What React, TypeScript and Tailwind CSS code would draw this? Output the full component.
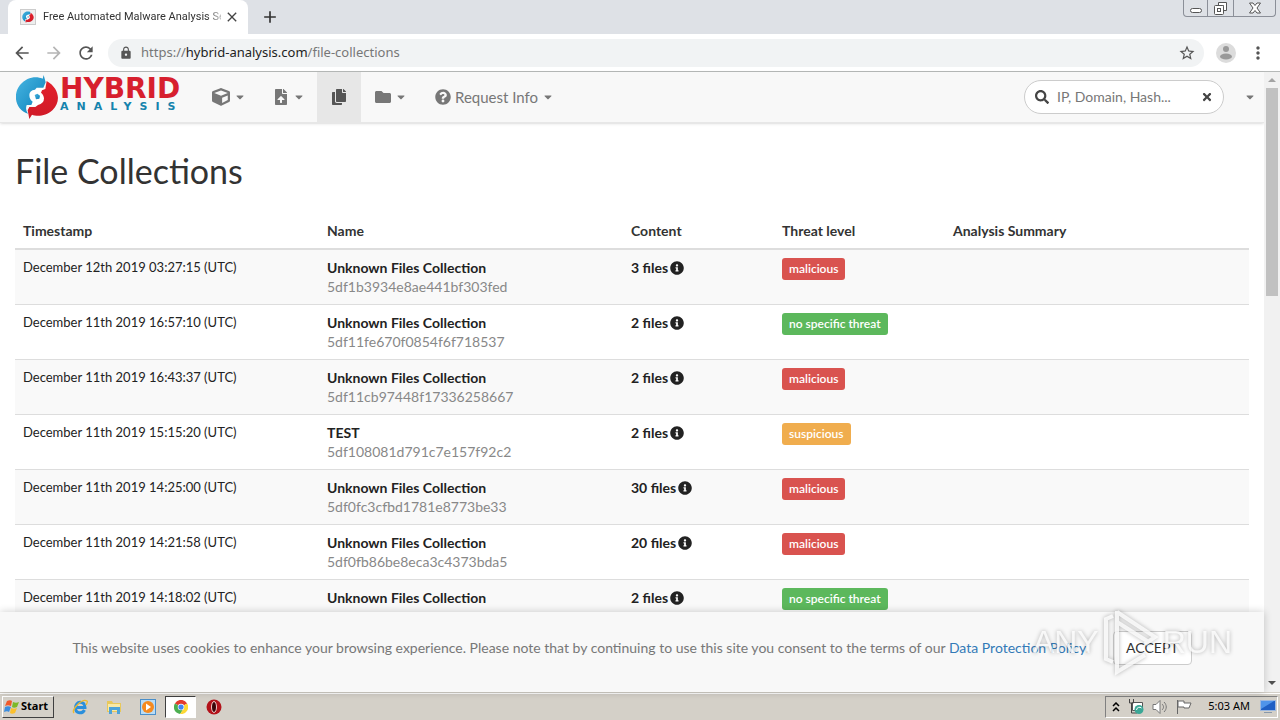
import React from 'react';
import {
  FaCaretDown, FaCopy, FaCube, FaFileUpload, FaFolder, FaInfoCircle,
  FaQuestionCircle, FaSearch, FaTimes
} from 'react-icons/fa';
import { MdArrowBack, MdArrowForward, MdRefresh, MdLock, MdStarBorder, MdMoreVert, MdClose, MdAdd } from 'react-icons/md';

type Threat = 'malicious' | 'no specific threat' | 'suspicious';

interface Collection {
  time: string;
  name: string;
  hash: string;
  files: number;
  threat: Threat;
}

const COLLECTIONS: Collection[] = [
  { time: 'December 12th 2019 03:27:15 (UTC)', name: 'Unknown Files Collection', hash: '5df1b3934e8ae441bf303fed', files: 3, threat: 'malicious' },
  { time: 'December 11th 2019 16:57:10 (UTC)', name: 'Unknown Files Collection', hash: '5df11fe670f0854f6f718537', files: 2, threat: 'no specific threat' },
  { time: 'December 11th 2019 16:43:37 (UTC)', name: 'Unknown Files Collection', hash: '5df11cb97448f17336258667', files: 2, threat: 'malicious' },
  { time: 'December 11th 2019 15:15:20 (UTC)', name: 'TEST', hash: '5df108081d791c7e157f92c2', files: 2, threat: 'suspicious' },
  { time: 'December 11th 2019 14:25:00 (UTC)', name: 'Unknown Files Collection', hash: '5df0fc3cfbd1781e8773be33', files: 30, threat: 'malicious' },
  { time: 'December 11th 2019 14:21:58 (UTC)', name: 'Unknown Files Collection', hash: '5df0fb86be8eca3c4373bda5', files: 20, threat: 'malicious' },
  { time: 'December 11th 2019 14:18:02 (UTC)', name: 'Unknown Files Collection', hash: '5df0fa8ae7cb8213c7d421', files: 2, threat: 'no specific threat' }
];

const THREAT_COLORS: Record<Threat, string> = {
  malicious: 'bg-[#d9534f]',
  'no specific threat': 'bg-[#5cb85c]',
  suspicious: 'bg-[#f0ad4e]'
};

const SwirlLogo: React.FC<{ className: string }> = ({ className }) => (
  <svg className={className} viewBox="0 0 126 132" aria-hidden="true">
    <defs>
      <linearGradient id="blue" x1="0" y1="0" x2="1" y2="1">
        <stop offset="0" stopColor="#49b7e3" />
        <stop offset="1" stopColor="#0b7fb9" />
      </linearGradient>
      <linearGradient id="red" x1="0" y1="0" x2="0" y2="1">
        <stop offset="0" stopColor="#e3202c" />
        <stop offset="1" stopColor="#cf1a27" />
      </linearGradient>
    </defs>
    <path fill="#fff" d="M40 40h44v52H40z" />
    <path fill="url(#blue)" d="M83 0L89 22 82 38 62 38 57 44Q40 46 40 60C40 70 44 76 50 80L46 90 32 90Q27 104 36 116C0 106-12 60 12 30C32 6 60 2 80 11z" />
    <path fill="url(#blue)" d="M56 60l8-4 8 6-2 9-10 2z" />
    <path fill="url(#red)" d="M92 18C130 40 136 80 110 105C88 126 60 124 48 119L40 132 35 106 40 96 58 96 66 90Q84 86 84 70C83 61 80 57 75 53L78 46 88 42z" />
  </svg>
);

const Caret = () => <FaCaretDown className="h-3 w-3 text-[#777]" />;

const TitleBar = () => (
  <header className="flex h-[34px] shrink-0 items-stretch bg-[#dee1e6]">
    <div className="ml-2 flex w-60 items-center gap-[7px] rounded-t-lg bg-white pr-2 pl-3">
      <span className="flex h-4 w-4 shrink-0 items-center justify-center border border-[#ccc] bg-[#eee]">
        <SwirlLogo className="h-3 w-3" />
      </span>
      <span className="min-w-0 flex-1 overflow-hidden font-['Roboto',sans-serif] text-[11px] whitespace-nowrap text-[#333] [mask-image:linear-gradient(to_right,black_92%,rgba(0,0,0,0.3))]">
        Free Automated Malware Analysis Se
      </span>
      <button aria-label="Close tab" className="-ml-1"><MdClose className="h-4 w-4 text-[#444]" /></button>
    </div>
    <button aria-label="New tab" className="ml-3"><MdAdd className="h-5 w-5 text-[#333]" /></button>
    <div className="mr-1 ml-auto flex h-[17px] w-[93px] divide-x divide-[#8b8f98] rounded-b-sm border border-t-0 border-[#8b8f98]">
      <button aria-label="Minimize" className="flex w-6 items-end justify-center pb-[3px]">
        <span className="h-[5px] w-3 rounded-sm border border-[#555] bg-white" />
      </button>
      <button aria-label="Restore" className="flex w-[26px] items-center justify-center">
        <svg className="h-[13px] w-[13px]" viewBox="0 0 13 13" fill="#fff" stroke="#555"><path d="M4.500.500h8v8h-3v-5h-5z" /><rect x=".5" y="3.500" width="9" height="9" rx="1" /><rect x="3.500" y="6.500" width="3" height="3" /></svg>
      </button>
      <button aria-label="Close" className="flex flex-1 items-center justify-center">
        <svg className="h-3 w-3" viewBox="0 0 12 12" fill="#fff" stroke="#555"><path d="M.5 1h3.500L6 3.500 8 1h3.500L8 6l3.500 5H8L6 8.500 4 11H.5L4 6z" /></svg>
      </button>
    </div>
  </header>
);

const AddressBar = () => (
  <div className="flex h-[38px] shrink-0 items-center border-b border-[#b6b9b8] bg-white px-3 text-[#555]">
    <div className="flex gap-3">
      <button aria-label="Back"><MdArrowBack className="h-5 w-5" /></button>
      <button aria-label="Forward"><MdArrowForward className="h-5 w-5 text-[#b5b5b5]" /></button>
      <button aria-label="Reload"><MdRefresh className="h-5 w-5" /></button>
    </div>
    <div className="ml-3 flex h-7 flex-1 items-center rounded-full bg-[#f1f3f4] pr-2 pl-[11px]">
      <MdLock className="h-3.5 w-3.5" />
      <a href="#url" className="ml-2 font-['Noto_Sans',sans-serif] text-[13px] text-[#777]">
        https://<span className="text-[#222]">hybrid-analysis.com</span>/file-collections
      </a>
      <button aria-label="Bookmark" className="ml-auto"><MdStarBorder className="h-[18px] w-[18px]" /></button>
    </div>
    <button aria-label="Profile" className="ml-3">
      <svg className="h-5 w-5" viewBox="0 0 20 20"><circle cx="10" cy="10" r="10" fill="#dcdcdc" /><circle cx="10" cy="6" r="3" fill="#999" /><ellipse cx="10" cy="13.500" rx="6" ry="3" fill="#999" /></svg>
    </button>
    <button aria-label="Menu" className="ml-3"><MdMoreVert className="h-5 w-5" /></button>
  </div>
);

const NavBar = () => (
  <nav className="flex h-[51px] shrink-0 border-b border-[#e7e7e7] bg-[#f8f8f8] pl-4 text-[#777] shadow-sm">
    <a href="#home" className="flex w-[181px] items-center gap-0.5">
      <SwirlLogo className="h-11 w-[42px] shrink-0" />
      <span className="flex flex-col font-['DejaVu_Sans',sans-serif]">
        <span className="text-[28px] leading-5 font-bold text-[#d71f2e]">HYBRID</span>
        <span className="text-[11px] leading-4 font-bold tracking-[8px] text-[#1583ad]">ANALYSIS</span>
      </span>
    </a>
    <button aria-label="Sandbox" className="flex items-center gap-1 px-[15px]"><FaCube className="h-[18px] w-[18px]" /><Caret /></button>
    <button aria-label="Uploads" className="flex items-center gap-1 px-3"><FaFileUpload className="h-4 w-4" /><Caret /></button>
    <button aria-label="File collections" className="flex w-11 items-center justify-center bg-[#e7e7e7] text-[#555]"><FaCopy className="h-4 w-4" /></button>
    <button aria-label="Folders" className="flex items-center gap-1 px-[14px]"><FaFolder className="h-4 w-4" /><Caret /></button>
    <button className="flex items-center gap-1 px-[14px] text-[15px]"><FaQuestionCircle className="h-4 w-4" />Request Info<Caret /></button>
    <div className="ml-auto flex items-center">
      <label className="flex h-[34px] w-[200px] items-center gap-2 rounded-full border border-[#ccc] bg-white px-2.5">
        <FaSearch className="h-3.5 w-3.5 shrink-0 text-[#444]" />
        <input aria-label="Search" placeholder="IP, Domain, Hash..." className="min-w-0 flex-1 text-sm outline-none placeholder:text-[#777]" />
        <FaTimes className="h-3 w-3 shrink-0 text-[#444]" />
      </label>
      <button aria-label="More" className="pr-2 pl-5"><Caret /></button>
    </div>
  </nav>
);

const CollectionsTable = () => (
  <table className="mt-[22px] w-full table-fixed border-collapse text-left text-sm leading-[19px] text-[#222]">
    <colgroup>
      <col className="w-[304px]" />
      <col className="w-[304px]" />
      <col className="w-[151px]" />
      <col className="w-[171px]" />
      <col />
    </colgroup>
    <thead>
      <tr className="border-b-2 border-[#ddd]">
        {['Timestamp', 'Name', 'Content', 'Threat level', 'Analysis Summary'].map(h => (
          <th key={h} className="p-2 font-bold text-[#333]">{h}</th>
        ))}
      </tr>
    </thead>
    <tbody>
      {COLLECTIONS.map(c => (
        <tr key={c.time} className="border-b border-[#ddd] align-top odd:bg-[#f9f9f9]">
          <td className="p-2 text-[13px]">{c.time}</td>
          <td className="p-2">
            <strong className="block font-bold">{c.name}</strong>
            <span className="block text-[#888]">{c.hash}</span>
          </td>
          <td className="p-2 font-bold">
            <span className="flex items-center gap-0.5">{c.files} files <FaInfoCircle className="h-3.5 w-3.5" /></span>
          </td>
          <td className="p-2">
            <span className={`inline-block rounded-[3px] px-[7px] text-xs leading-[22px] font-semibold text-white ${THREAT_COLORS[c.threat]}`}>{c.threat}</span>
          </td>
          <td className="p-2" />
        </tr>
      ))}
    </tbody>
  </table>
);

const Watermark = () => (
  <div className="pointer-events-none absolute right-8 bottom-4 flex items-center font-['Liberation_Sans',sans-serif] text-[32px] leading-none text-white/80 [filter:drop-shadow(0_0_2px_rgba(0,0,0,0.35))]">
    ANY
    <svg className="mx-1 h-[68px] w-14" viewBox="0 0 56 68" fill="none" stroke="currentColor" strokeWidth="4">
      <path d="M10 8L3 11v40l7 3M14 3v14M14 4l38 25-10 7M14 4v60l28-17M14 14l30 19" />
    </svg>
    RUN
  </div>
);

const CookieBar = () => (
  <footer className="relative flex h-20 shrink-0 items-center justify-center gap-6 bg-[#f8f8f8] pb-2 text-sm text-[#777] shadow-[0_0_8px_rgba(0,0,0,0.2)]">
    <p className="whitespace-nowrap">
      This website uses cookies to enhance your browsing experience. Please note that by continuing to use this site you consent to the terms of our{' '}
      <a href="#policy" className="text-[#337ab7]">Data Protection Policy</a>.
    </p>
    <button className="h-[34px] shrink-0 rounded-sm border border-[#ccc] bg-white px-3 text-[#333]">ACCEPT</button>
    <Watermark />
  </footer>
);

const ScrollBar = () => (
  <div className="flex w-4 shrink-0 flex-col items-center bg-[#f1f1f1]">
    <svg className="h-4 w-4" viewBox="0 0 16 16" fill="#a3a3a3"><path d="M4 10l4-4 4 4z" /></svg>
    <div className="h-[208px] w-3 bg-[#c1c1c1]" />
    <svg className="mt-auto h-4 w-4" viewBox="0 0 16 16" fill="#505050"><path d="M4 5h8l-4 4z" /></svg>
  </div>
);

const TaskBar = () => (
  <div className="flex h-7 shrink-0 items-center border-t border-[#d4d0c8] bg-[#d4d0c8] px-0.5 font-['Noto_Sans',sans-serif] text-[11px] text-black shadow-[inset_0_1px_0_#fff]">
    <button className="flex h-[22px] w-[52px] items-center gap-px border border-t-white border-r-[#404040] border-b-[#404040] border-l-white font-bold">
      <svg className="ml-px h-4 w-4 shrink-0" viewBox="0 0 16 16">
        <path fill="#f0592a" d="M3 2c2-1 4-1 5 0L7 7C5 6 3 6 1 7z" /><path fill="#7db928" d="M9 3c2 1 4 1 6 0l-2 5c-2 1-4 1-5 0z" />
        <path fill="#3c8dde" d="M1 8c2-1 4-1 6 0l-2 5c-1-1-3-1-5 0z" /><path fill="#fbc02d" d="M7 9c2 1 4 1 6 0l-2 5c-2 1-4 1-5 0z" />
      </svg>
      Start
    </button>
    <div className="ml-[9px] flex items-center">
      <button aria-label="Internet Explorer" className="flex w-[34px] justify-center">
        <svg className="h-4 w-4" viewBox="0 0 16 16" fill="none"><path stroke="#2a8fdc" strokeWidth="3" d="M4 8.500h9C13 1 3 2 3.500 9c0 6 7 6 9 2" /><path stroke="#edb92e" strokeWidth="1.300" d="M2 14C-1 11 10-1 15 2c1 1 0 2-1 4" /></svg>
      </button>
      <button aria-label="Explorer" className="flex w-[34px] justify-center">
        <svg className="h-4 w-4" viewBox="0 0 16 16"><path fill="#e8c85b" d="M1 2h5l1 2h8v9H1z" /><path fill="#f8e9a6" d="M2 5h12v7H2z" /><path fill="#4da3d9" d="M3 8h11v7h-3v-4H6v4H3z" /></svg>
      </button>
      <button aria-label="Media Player" className="flex w-[34px] justify-center">
        <svg className="h-4 w-4" viewBox="0 0 16 16"><rect x=".5" y=".5" width="15" height="15" fill="#b9dcf5" stroke="#4a8fca" /><circle cx="8" cy="8" r="6" fill="#f58a1f" /><path fill="#fff" d="M6 4.500l5 3.500-5 3.500z" /></svg>
      </button>
      <button aria-label="Chrome" className="flex h-[22px] w-[31px] items-center justify-center border border-t-[#404040] border-r-white border-b-white border-l-[#404040] bg-white">
        <svg className="h-3.5 w-3.5" viewBox="0 0 16 16"><path fill="#e33b2e" d="M8 8L1 4a8 8 0 0114 0z" /><path fill="#4caf50" d="M8 8L1 4a8 8 0 006 12l4-6z" /><path fill="#fdd835" d="M8 8l7-4a8 8 0 01-8 12l4-6z" /><circle cx="8" cy="8" r="3.700" fill="#fff" /><circle cx="8" cy="8" r="3" fill="#4285f4" /></svg>
      </button>
      <button aria-label="Opera" className="flex w-9 justify-center">
        <svg className="h-4 w-4" viewBox="0 0 16 16"><circle cx="8" cy="8" r="7.500" fill="#b3121a" /><ellipse cx="8" cy="8" rx="2.500" ry="5.500" fill="#3a0508" stroke="#f3c9c9" /></svg>
      </button>
    </div>
    <div className="ml-auto flex h-[22px] items-center gap-2 border border-t-[#808080] border-r-white border-b-white border-l-[#808080] pr-px pl-1.5">
      <svg className="h-2.5 w-2" viewBox="0 0 8 10" fill="none" stroke="#000" strokeWidth="1.500"><path d="M1 4l3-3 3 3M1 9l3-3 3 3" /></svg>
      <svg className="h-4 w-4" viewBox="0 0 16 16"><path fill="#fff" stroke="#555" d="M4.500 3.500h10v8h-10z" /><path fill="none" stroke="#444" d="M1.500 0v4h4V0M3.500 4v10H9" /><circle cx="11" cy="10.500" r="4.500" fill="#3ba796" /><path stroke="#fff" fill="none" d="M8.500 11a3 3 0 015-2" /></svg>
      <svg className="h-4 w-4" viewBox="0 0 16 16" fill="none" stroke="#777"><path fill="#fff" d="M1 5.500h3l4-4v13l-4-4H1z" /><path d="M10 5c2 2 2 4 0 6M12 3c3 3 3 7 0 10" /></svg>
      <svg className="h-4 w-4" viewBox="0 0 16 16" fill="#fff" stroke="#666"><path d="M1.500 15V1M2 2h6v2h7l-2 5H8V8H2z" /></svg>
      <span className="ml-2">5:03 AM</span>
      <svg className="ml-0.5 h-[14px] w-4" viewBox="0 0 16 14"><path fill="#1f5fc4" stroke="#9cb8e0" d="M.5.5h15v10H.5z" /><path fill="#4f94ea" d="M1 1h13L1 9z" /><path fill="#8898aa" d="M4 12h8v1H4z" /></svg>
    </div>
  </div>
);

export default function App() {
  return (
    <div className="flex h-screen flex-col overflow-hidden bg-white font-['Lato',sans-serif]">
      <TitleBar />
      <AddressBar />
      <div className="flex min-h-0 flex-1">
        <div className="flex min-w-0 flex-1 flex-col">
          <NavBar />
          <main className="min-h-0 flex-1 overflow-hidden px-[15px] pt-7">
            <h1 className="text-[34px] leading-10 text-[#333]">File Collections</h1>
            <CollectionsTable />
          </main>
          <CookieBar />
        </div>
        <ScrollBar />
      </div>
      <TaskBar />
    </div>
  );
}
